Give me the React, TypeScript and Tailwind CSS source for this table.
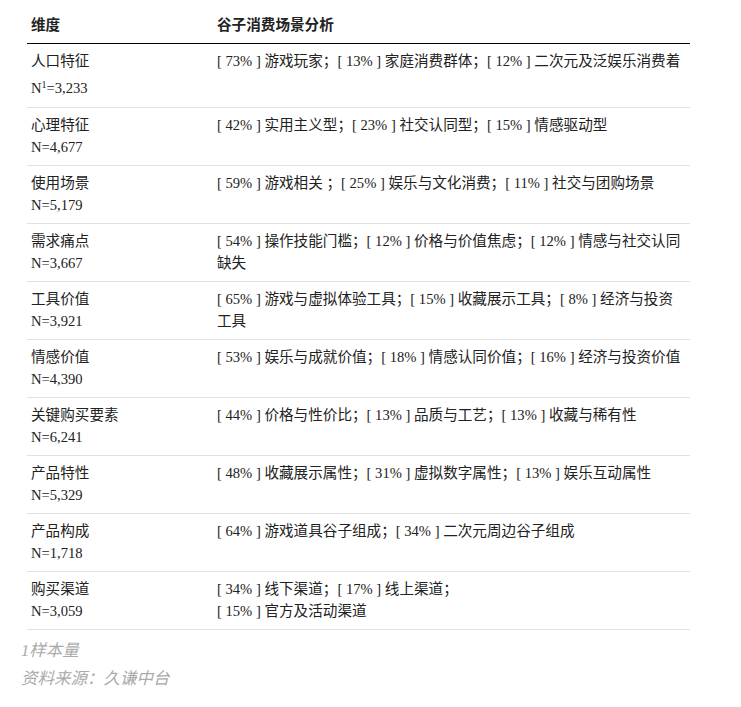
import React from "react";

type Row = { name: string; n: string; sup?: boolean; content: React.ReactNode };

const rows: Row[] = [
  { name: "人口特征", n: "3,233", sup: true, content: "[ 73% ] 游戏玩家；[ 13% ] 家庭消费群体；[ 12% ] 二次元及泛娱乐消费着" },
  { name: "心理特征", n: "4,677", content: "[ 42% ] 实用主义型；[ 23% ] 社交认同型；[ 15% ] 情感驱动型" },
  { name: "使用场景", n: "5,179", content: "[ 59% ] 游戏相关 ；[ 25% ] 娱乐与文化消费；[ 11% ] 社交与团购场景" },
  { name: "需求痛点", n: "3,667", content: "[ 54% ] 操作技能门槛；[ 12% ] 价格与价值焦虑；[ 12% ] 情感与社交认同缺失" },
  { name: "工具价值", n: "3,921", content: "[ 65% ] 游戏与虚拟体验工具；[ 15% ] 收藏展示工具；[ 8% ] 经济与投资工具" },
  { name: "情感价值", n: "4,390", content: "[ 53% ] 娱乐与成就价值；[ 18% ] 情感认同价值；[ 16% ] 经济与投资价值" },
  { name: "关键购买要素", n: "6,241", content: "[ 44% ] 价格与性价比；[ 13% ] 品质与工艺；[ 13% ] 收藏与稀有性" },
  { name: "产品特性", n: "5,329", content: "[ 48% ] 收藏展示属性；[ 31% ] 虚拟数字属性；[ 13% ] 娱乐互动属性" },
  { name: "产品构成", n: "1,718", content: "[ 64% ] 游戏道具谷子组成；[ 34% ] 二次元周边谷子组成" },
  {
    name: "购买渠道",
    n: "3,059",
    content: (
      <>
        [ 34% ] 线下渠道；[ 17% ] 线上渠道；
        <br />
        [ 15% ] 官方及活动渠道
      </>
    ),
  },
];

const font = "font-['Liberation_Serif','Noto_Sans_CJK_SC',serif]";

export default function App() {
  return (
    <div className={`min-h-screen bg-white px-[21px] pt-[7px] text-[#222] ${font}`}>
      <div className="mx-[6px] w-[663px] text-[14.6px] leading-[22px]">
        {/* header */}
        <div className="grid grid-cols-[186px_1fr] border-b border-black font-bold">
          <div className="px-[4px] py-[7px]">维度</div>
          <div className="px-[4px] py-[7px]">谷子消费场景分析</div>
        </div>

        {rows.map((row) => (
          <div key={row.name} className="grid grid-cols-[186px_1fr] border-b border-[#e2e2e2]">
            <div className={`px-[4px] pt-[6px] ${row.sup ? "pb-[8px]" : "pb-[7px]"}`}>
              <div>{row.name}</div>
              {row.sup ? (
                <div className="pt-[5px]">
                  N<sup className="top-0 align-[5px] text-[10px] leading-none">1</sup>={row.n}
                </div>
              ) : (
                <div>N={row.n}</div>
              )}
            </div>
            <div className="pl-[4px] pr-[8px] pt-[6px] pb-[7px]">{row.content}</div>
          </div>
        ))}
      </div>

      {/* notes */}
      <div className="mt-[7px] text-[16.5px] italic leading-[28px] text-[#aaa]">
        <div>1样本量</div>
        <div>资料来源：久谦中台</div>
      </div>
    </div>
  );
}
